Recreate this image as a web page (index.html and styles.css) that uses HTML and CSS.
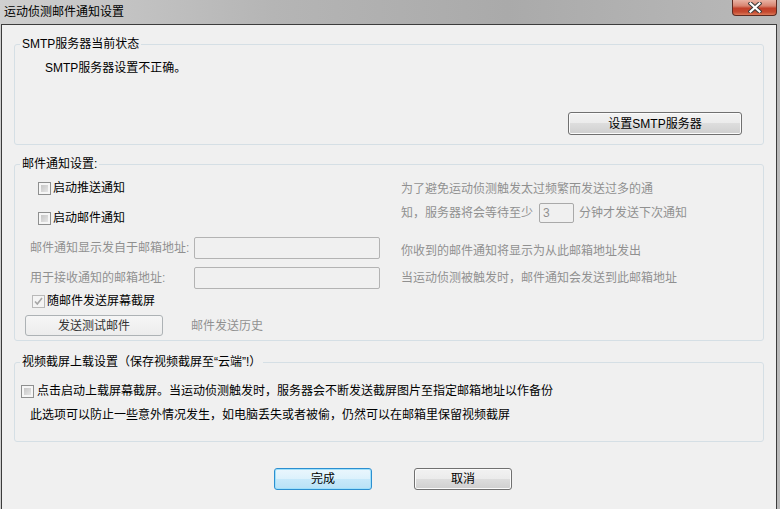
FILE: index.html
```html
<!DOCTYPE html>
<html>
<head>
<meta charset="UTF-8">
<title>运动侦测邮件通知设置</title>
<link rel="stylesheet" href="styles.css">
</head>
<body>

	<div class="window">
		<div class="titlebar">
			<span class="title">运动侦测邮件通知设置</span>
			<span class="close">
				<svg width="14" height="11" viewBox="0 0 14 11">
					<path d="M2.5 1.5 L11.5 9.5 M11.5 1.5 L2.5 9.5" stroke="#3b3b3b" stroke-width="4.2" stroke-linecap="square"/>
					<path d="M2.5 1.5 L11.5 9.5 M11.5 1.5 L2.5 9.5" stroke="#fff" stroke-width="2.2" stroke-linecap="square"/>
				</svg>
			</span>
		</div>

		<div class="client">
			<!-- SMTP 상태 -->
			<fieldset class="group group-smtp">
				<legend>SMTP服务器当前状态</legend>
				<p class="status">SMTP服务器设置不正确。</p>
				<div class="smtp-row">
					<button class="btn btn-smtp">设置SMTP服务器</button>
				</div>
			</fieldset>

			<!-- 메일 알림 설정 -->
			<fieldset class="group group-mail">
				<legend>邮件通知设置:</legend>
				<div class="mail-cols">
					<div class="mail-left">
						<div class="check-row cb-push"><span class="check"></span><span class="check-text">启动推送通知</span></div>
						<div class="check-row cb-mail"><span class="check"></span><span class="check-text">启动邮件通知</span></div>
						<div class="field-row fr-from">
							<span class="field-label">邮件通知显示发自于邮箱地址:</span>
							<input class="field" type="text" disabled>
						</div>
						<div class="field-row fr-to">
							<span class="field-label">用于接收通知的邮箱地址:</span>
							<input class="field" type="text" disabled>
						</div>
						<div class="check-row cb-shot">
							<span class="check check-on">
								<svg width="11" height="11" viewBox="0 0 11 11"><path d="M2 5.5 L4.3 8 L9 2" fill="none" stroke="#a6a6a6" stroke-width="1.6"/></svg>
							</span>
							<span class="check-text">随邮件发送屏幕截屏</span>
						</div>
						<div class="test-row">
							<button class="btn btn-off btn-test">发送测试邮件</button>
							<span class="history">邮件发送历史</span>
						</div>
					</div>
					<div class="mail-right">
						<div class="note note-1">为了避免运动侦测触发太过频繁而发送过多的通</div>
						<div class="note note-2">知，服务器将会等待至少<input class="mins" type="text" value="3" disabled>分钟才发送下次通知</div>
						<div class="note note-3">你收到的邮件通知将显示为从此邮箱地址发出</div>
						<div class="note note-4">当运动侦测被触发时，邮件通知会发送到此邮箱地址</div>
					</div>
				</div>
			</fieldset>

			<!-- 업로드 설정 -->
			<fieldset class="group group-upload">
				<legend>视频截屏上载设置（保存视频截屏至“云端”!）</legend>
				<div class="check-row cb-upload"><span class="check"></span><span class="check-text">点击启动上载屏幕截屏。当运动侦测触发时，服务器会不断发送截屏图片至指定邮箱地址以作备份</span></div>
				<p class="upload-note">此选项可以防止一些意外情况发生，如电脑丢失或者被偷，仍然可以在邮箱里保留视频截屏</p>
			</fieldset>

			<div class="footer">
				<button class="btn btn-default">完成</button>
				<button class="btn">取消</button>
			</div>
		</div>
	</div>

</body>
</html>
```

FILE: styles.css
```css
body{
	margin: 0;
	width: 780px;
	height: 509px;
	overflow: hidden;
	font-family: "Liberation Sans", "Noto Sans CJK SC", sans-serif;
	font-size: 12px;
	line-height: 14px;
	color: #000;
}
.window{
	height: 509px;
	display: flex;
	flex-direction: column;
	background: linear-gradient(to right, #cfcfcf, #b5b5b5 35%, #aaaaaa 65%, #b9b9b9);
}
.titlebar{
	height: 24px;
	flex: none;
	display: flex;
	justify-content: space-between;
	align-items: flex-start;
}
.title{
	padding: 5px 0 0 4px;
}
.close{
	width: 45px;
	height: 16px;
	margin-right: 3px;
	box-sizing: border-box;
	border: 1px solid #5e2a20;
	border-top: none;
	border-radius: 0 0 4px 4px;
	background: linear-gradient(#e9b3a4 0%, #d88470 40%, #c2402a 55%, #c54a30 80%, #dc7a5a 100%);
	display: flex;
	align-items: center;
	justify-content: center;
}
.close svg{
	display: block;
}

.client{
	flex: 1;
	margin: 0 3px 0 1px;
	border: 1px solid #3c3c3c;
	border-bottom: none;
	background: #f0f0f0;
	padding-top: 12px;
}

/* 그룹 박스 */
.group{
	margin: 0 12px;
	padding: 0;
	min-width: 0;
	border: 1px solid #d5dfe5;
	border-radius: 3px;
}
.group > legend{
	margin-left: 5px;
	padding: 0 2px;
	line-height: 14px;
}
.group-mail{
	margin-top: 12px;
}
.group-upload{
	margin-top: 14px;
}

.status{
	margin: 10px 0 0 30px;
}
.smtp-row{
	display: flex;
	justify-content: flex-end;
	margin-top: 37px;
	padding: 0 21px 9px 0;
}

/* 버튼 */
.btn{
	font: inherit;
	line-height: 14px;
	box-sizing: border-box;
	width: 98px;
	height: 22px;
	padding: 0;
	color: #000;
	border: 1px solid #707070;
	border-radius: 3px;
	background: linear-gradient(#f2f2f2 0%, #ebebeb 50%, #dddddd 50%, #cfcfcf 100%);
	box-shadow: inset 0 0 0 1px #fbfbfb;
}
.btn-smtp{
	width: 174px;
	height: 23px;
}
.btn-default{
	border-color: #2c8fd0;
	background: linear-gradient(#eaf6fd 0%, #dcf1fc 50%, #c8e9fa 50%, #b9e1f6 100%);
	box-shadow: inset 0 0 0 1px #9fe0fb;
}
.btn-off{
	color: #333;
	border-color: #adb2b5;
	background: linear-gradient(#f6f6f6, #ececec);
	box-shadow: none;
}

/* 체크박스 */
.check-row{
	display: flex;
	align-items: center;
	height: 14px;
}
.check{
	width: 13px;
	height: 13px;
	flex: none;
	box-sizing: border-box;
	border: 1px solid #8e8f8f;
	background: linear-gradient(135deg, #bdbdbd, #eeeeee);
	box-shadow: inset 0 0 0 2px #f6f6f6;
	display: flex;
	align-items: center;
	justify-content: center;
}
.check-on{
	border-color: #b9b9b9;
	background: #f4f4f4;
	box-shadow: none;
}
.check-text{
	margin-left: 2px;
	white-space: nowrap;
}

.mail-cols{
	display: flex;
	padding-bottom: 4px;
}
.mail-left{
	width: 386px;
	box-sizing: border-box;
	padding-left: 10px;
	flex: none;
}
.cb-push{
	margin: 10px 0 0 13px;
}
.cb-mail{
	margin: 16px 0 0 13px;
}
.cb-shot{
	margin: 5px 0 0 7px;
}
.field-row{
	display: flex;
	align-items: center;
	height: 22px;
	margin-left: 5px;
	color: #909090;
}
.fr-from{
	margin-top: 12px;
}
.fr-to{
	margin-top: 8px;
}
.field-label{
	width: 164px;
	flex: none;
	white-space: nowrap;
}
.field{
	width: 186px;
	height: 22px;
	box-sizing: border-box;
	margin: 0;
	border: 1px solid #b3b3b3;
	border-radius: 2px;
	background: #f0f0f0;
}
.test-row{
	display: flex;
	align-items: center;
	margin-top: 7px;
}
.btn-test{
	width: 138px;
	height: 21px;
}
.history{
	margin-left: 28px;
	color: #909090;
}

.mail-right{
	color: #909090;
	white-space: nowrap;
}
.note-1{
	margin-top: 11px;
}
.note-2{
	margin-top: 7px;
	height: 20px;
	display: flex;
	align-items: center;
}
.mins{
	width: 35px;
	height: 20px;
	box-sizing: border-box;
	margin: 0 5px 0 6px;
	padding: 0 0 0 3px;
	font: inherit;
	color: #909090;
	border: 1px solid #a9a9a9;
	border-radius: 2px;
	background: #f0f0f0;
}
.note-3{
	margin-top: 21px;
}
.note-4{
	margin-top: 13px;
}

.cb-upload{
	margin: 15px 0 0 6px;
}
.cb-upload .check-text{
	margin-left: 3px;
}
.upload-note{
	margin: 10px 0 0 15px;
	padding-bottom: 19px;
}

.footer{
	display: flex;
	gap: 42px;
	margin-top: 26px;
	padding-left: 272px;
}
```
